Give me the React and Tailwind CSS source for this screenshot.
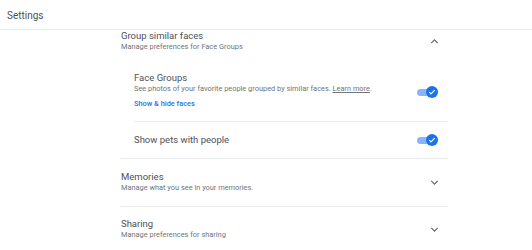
const Chevron = ({ up }) => (
  <svg width="11" height="11" viewBox="0 0 24 24" className="text-[#5f6368]">
    <path
      d={up ? "M5 15.5l7-7 7 7" : "M5 8.5l7 7 7-7"}
      fill="none"
      stroke="currentColor"
      strokeWidth="2.4"
    />
  </svg>
);

const Toggle = () => (
  <div className="relative w-[21px] h-[12px]">
    <div className="absolute left-0 top-[3px] w-[17px] h-[7px] rounded-full bg-[#8ab4f8]" />
    <div className="absolute right-0 top-0 w-[12px] h-[12px] rounded-full bg-[#1a73e8] flex items-center justify-center">
      <svg width="8" height="8" viewBox="0 0 24 24">
        <path d="M4 12.5l5 5L20 6.5" fill="none" stroke="white" strokeWidth="3.5" />
      </svg>
    </div>
  </div>
);

const SectionHead = ({ title, sub, up }) => (
  <div className="flex items-center justify-between">
    <div>
      <div className="text-[9.5px] leading-[11px] text-[#4d5156]">{title}</div>
      <div className="text-[7.4px] leading-[11px] text-[#70757a]">{sub}</div>
    </div>
    <div className="w-[24px] mr-[2px] flex justify-center">
      <Chevron up={up} />
    </div>
  </div>
);

export default function App() {
  return (
    <div className="w-[532px] h-[250px] overflow-hidden bg-white font-['Roboto',sans-serif]">
      <div className="h-[30px] border-b border-[#e8eaed] flex items-center pl-[7px] pt-[1px]">
        <span className="text-[10px] text-[#4d5156]">Settings</span>
      </div>

      <div className="ml-[121px] w-[327px]">
        <div className="pb-[8px]">
          <SectionHead title="Group similar faces" sub="Manage preferences for Face Groups" up />
        </div>

        <div className="ml-[13px]">
          <div className="pt-[12px] pb-[12px] flex items-center justify-between border-b border-[#e8eaed]">
            <div>
              <div className="text-[9.5px] leading-[11px] text-[#4d5156]">Face Groups</div>
              <div className="text-[7.4px] leading-[12px] text-[#70757a]">
                See photos of your favorite people grouped by similar faces.{" "}
                <span className="underline">Learn more</span>.
              </div>
              <div className="mt-[3px] text-[7.4px] leading-[11px] font-medium text-[#1a73e8]">
                Show &amp; hide faces
              </div>
            </div>
            <div className="mr-[10px] mt-[3px]">
              <Toggle />
            </div>
          </div>

          <div className="h-[36px] flex items-center justify-between">
            <div className="text-[9.5px] text-[#4d5156]">Show pets with people</div>
            <div className="mr-[10px]">
              <Toggle />
            </div>
          </div>
        </div>

        <div className="border-t border-[#e8eaed] pt-[12px] h-[48px]">
          <SectionHead title="Memories" sub="Manage what you see in your memories." />
        </div>

        <div className="border-t border-[#e8eaed] pt-[11px] h-[48px]">
          <SectionHead title="Sharing" sub="Manage preferences for sharing" />
        </div>
      </div>
    </div>
  );
}
